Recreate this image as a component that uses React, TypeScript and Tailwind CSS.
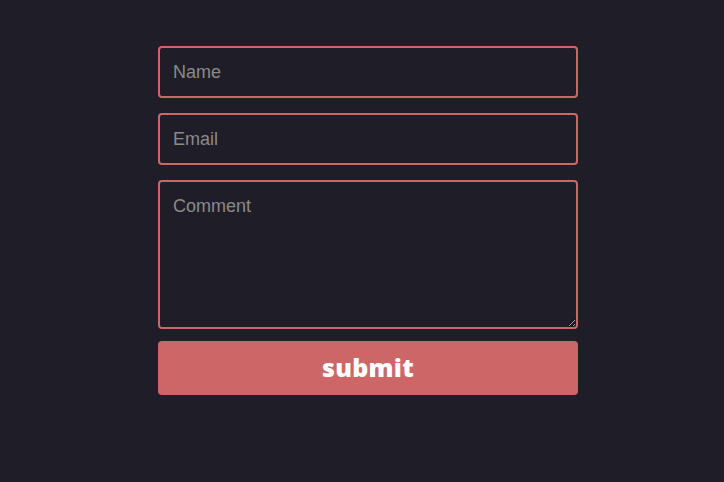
export default function App() {
  return (
    <div className="min-h-screen w-full bg-[#1f1e28] flex justify-start pl-[158px] pt-[46px]">
      <form
        className="w-[420px] flex flex-col"
        onSubmit={e => e.preventDefault()}
        style={{ fontFamily: '"Liberation Sans", Arial, sans-serif' }}
      >
        <input
          type="text"
          placeholder="Name"
          className="h-[52px] w-full rounded-[4px] border-2 border-[#cd6767] bg-[#1f1e28] px-[13px] text-[18px] text-[#e5e5e5] placeholder:text-[#8a8a8a] outline-none"
        />
        <input
          type="email"
          placeholder="Email"
          className="mt-[15px] h-[52px] w-full rounded-[4px] border-2 border-[#cd6767] bg-[#1f1e28] px-[13px] text-[18px] text-[#e5e5e5] placeholder:text-[#8a8a8a] outline-none"
        />
        <textarea
          placeholder="Comment"
          className="mt-[15px] block h-[149px] w-full rounded-[4px] border-2 border-[#cd6767] bg-[#1f1e28] px-[13px] pt-[13px] text-[18px] leading-[22px] text-[#e5e5e5] placeholder:text-[#8a8a8a] outline-none resize-y"
        />
        <button
          type="submit"
          className="mt-[12px] h-[54px] w-full rounded-[4px] bg-[#cd6767] text-[25px] font-extrabold tracking-[0.3px] text-white"
          style={{ fontFamily: '"Open Sans", "DejaVu Sans", sans-serif' }}
        >
          submit
        </button>
      </form>
    </div>
  );
}
